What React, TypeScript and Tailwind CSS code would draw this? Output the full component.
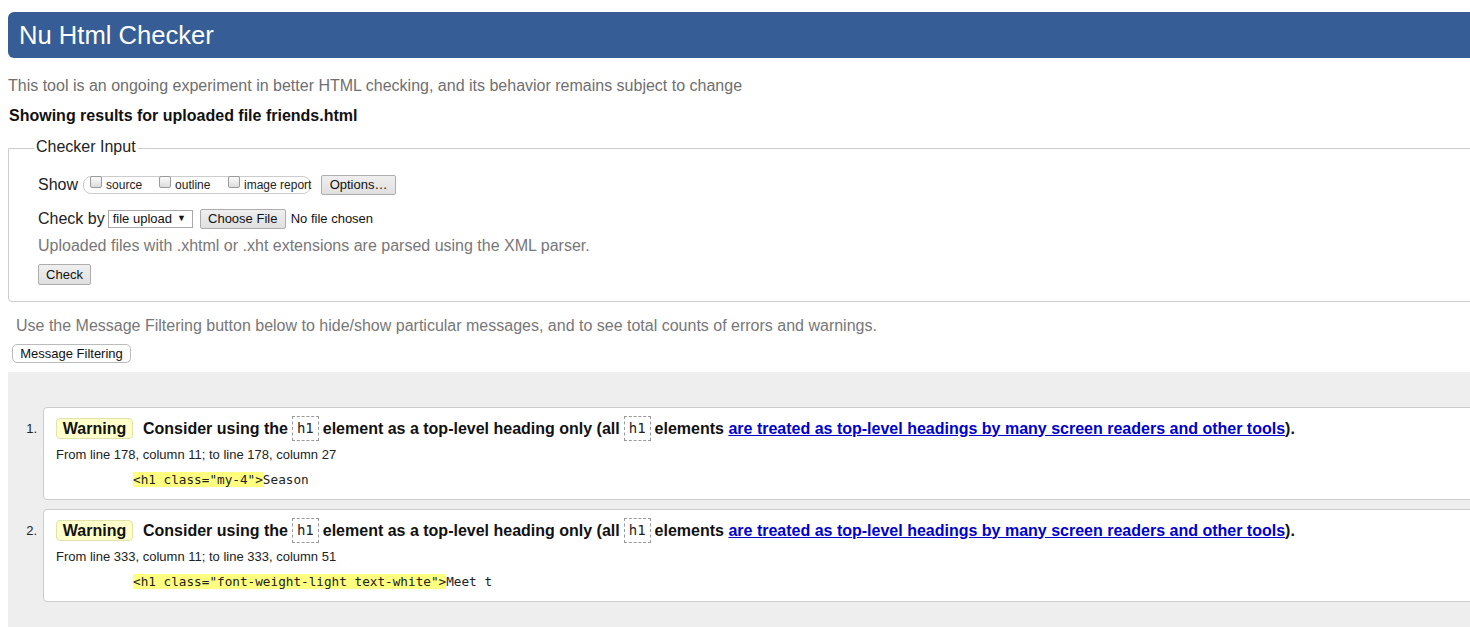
const sans = "font-['Liberation_Sans',Arial,sans-serif]"
const mono = "font-['DejaVu_Sans_Mono','Liberation_Mono',monospace]"

function Box() {
    return <span className="inline-block h-[12px] w-[12px] shrink-0 rounded-[2px] border border-[#9a9a9a] bg-gradient-to-b from-[#fcfcfc] to-[#dcdcdc] mr-[4px] -translate-y-[3px]" />
}

function Code() {
    return (
        <code className={`${mono} mx-[4px] inline-flex h-[25px] items-center border border-dashed border-[#999] px-[4px] text-[14px] font-normal text-[#222]`}>
            h1
        </code>
    )
}

function Message({ n, from, code, rest }: { n: number; from: string; code: string; rest: string }) {
    return (
        <div className="flex">
            <div className="w-[35px] shrink-0 pt-[14px] pr-[6px] text-right text-[13px] leading-[16px] text-[#222]">{n}.</div>
            <div className="w-[1500px] rounded-l-[4px] border border-[#ccc] bg-white pt-[8px] pb-[11px] pl-[12px]">
                <div className="flex h-[25px] items-center whitespace-nowrap text-[16px] font-bold text-[#111]">
                    <span className="mr-[10px] flex h-[21px] w-[77px] items-center justify-center rounded-[4px] border border-[#e2e2a8] bg-[#ffffcc]">
                        Warning
                    </span>
                    Consider using the
                    <Code />
                    element as a top-level heading only (all
                    <Code />
                    elements&nbsp;
                    <a href="#" className="text-[#0000cc] underline">are treated as top-level headings by many screen readers and other tools</a>
                    ).
                </div>
                <div className="mt-[6px] text-[13px] leading-[16px] text-[#222]">{from}</div>
                <div className={`${mono} mt-[9px] pl-[77px] text-[12.7px] leading-[16px] whitespace-pre text-[#222]`}>
                    <b className="bg-[#ffff80] font-normal">{code}</b>
                    {rest}
                </div>
            </div>
        </div>
    )
}

export default function App() {
    const btn = "flex items-center justify-center border border-[#adadad] bg-gradient-to-b from-[#efefef] to-[#e0e0e0] text-[13px] text-[#111] rounded-[2px]"

    return (
        <div className={`${sans} h-[627px] w-[1470px] overflow-hidden bg-white text-[#222]`}>
            <div className="w-[1600px]">
                <div className="mx-2 mt-3 flex h-[46px] items-center rounded-l-[6px] bg-[#365d95] pl-[11px] text-[25.6px] text-white">
                    Nu Html Checker
                </div>

                <p className="mt-[18px] pl-2 text-[16px] leading-[20px] text-[#6f6f6f]">
                    This tool is an ongoing experiment in better HTML checking, and its behavior remains subject to change
                </p>
                <p className="mt-[10px] pl-[9px] text-[16px] leading-[20px] font-bold text-[#111]">
                    Showing results for uploaded file friends.html
                </p>

                <div className="mx-2 mt-[22px] rounded-b-[4px] border border-[#ccc] pl-[29px] pb-[16px]">
                    <div className="-mt-[12px] -ml-[4px] w-fit bg-white px-[2px] text-[16px] leading-[20px] text-[#222]">
                        Checker Input
                    </div>

                    <div className="mt-[18px] flex h-[20px] items-center text-[16px]">
                        <span>Show</span>
                        <div className="ml-[5px] flex h-[18px] w-[228px] items-center whitespace-nowrap rounded-[8px] border border-[#ccc] pl-[6px] text-[12px] text-[#222]">
                            <label className="flex w-[69px] shrink-0 items-center"><Box />source</label>
                            <label className="flex w-[69px] shrink-0 items-center"><Box />outline</label>
                            <label className="flex shrink-0 items-center"><Box />image report</label>
                        </div>
                        <button className={`${btn} ml-[10px] h-[20px] w-[75px]`}>Options…</button>
                    </div>

                    <div className="mt-[14px] flex h-[20px] items-center text-[16px]">
                        <span>Check by</span>
                        <div className="ml-[3px] flex h-[18px] w-[85px] items-center border border-[#a9a9a9] bg-white pl-[4px] text-[13px] text-[#111]">
                            file upload <span className="ml-[5px] text-[9px]">▼</span>
                        </div>
                        <button className={`${btn} ml-[7px] h-[20px] w-[86px]`}>Choose File</button>
                        <span className="ml-[5px] text-[13px] text-[#111]">No file chosen</span>
                    </div>

                    <p className="mt-[7px] text-[16px] leading-[20px] text-[#777]">
                        Uploaded files with .xhtml or .xht extensions are parsed using the XML parser.
                    </p>

                    <button className={`${btn} mt-[8px] h-[21px] w-[53px]`}>Check</button>
                </div>

                <p className="mt-[14px] pl-4 text-[16px] leading-[20px] text-[#777]">
                    Use the Message Filtering button below to hide/show particular messages, and to see total counts of errors and warnings.
                </p>
                <div className="mt-[8px] pl-3">
                    <button className="flex h-[19px] w-[119px] items-center justify-center rounded-[5px] border border-[#bbb] bg-white text-[13px] text-[#111]">
                        Message Filtering
                    </button>
                </div>

                <div className="mt-[9px] ml-2 flex h-[300px] flex-col gap-[9px] bg-[#eee] pt-[35px]">
                    <Message
                        n={1}
                        from="From line 178, column 11; to line 178, column 27"
                        code={'<h1 class="my-4">'}
                        rest="Season"
                    />
                    <Message
                        n={2}
                        from="From line 333, column 11; to line 333, column 51"
                        code={'<h1 class="font-weight-light text-white">'}
                        rest="Meet t"
                    />
                </div>
            </div>
        </div>
    )
}
